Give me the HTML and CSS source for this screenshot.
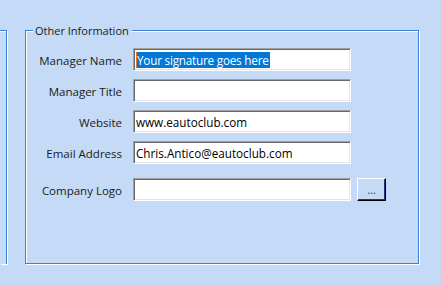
FILE: index.html
```html
<!DOCTYPE html>
<html lang="en">
<head>
    <meta charset="UTF-8">
    <title>Other Information</title>
    <link rel="stylesheet" href="styles.css">
</head>
<body>
    <div class="page">
        <div class="side-panel"></div>

        <div class="group">
            <span class="caption">Other Information</span>

            <div class="row">
                <label class="label">Manager Name</label>
                <div class="textbox"><span class="selected">Your signature goes here</span></div>
            </div>
            <div class="row">
                <label class="label">Manager Title</label>
                <div class="textbox"></div>
            </div>
            <div class="row">
                <label class="label">Website</label>
                <div class="textbox">www.eautoclub.com</div>
            </div>
            <div class="row">
                <label class="label">Email Address</label>
                <div class="textbox">Chris.Antico@eautoclub.com</div>
            </div>
            <div class="row row-logo">
                <label class="label">Company Logo</label>
                <div class="textbox"></div>
                <button type="button" class="browse">...</button>
            </div>
        </div>
    </div>
</body>
</html>
```

FILE: styles.css
```css
* {
    box-sizing: border-box;
}

body {
    margin: 0;
    background: #c4daf6;
    font-family: 'Open Sans', 'Noto Sans', sans-serif;
    font-size: 11px;
    color: #1a1a1a;
}

.page {
    display: flex;
    padding-top: 30px;
    height: 285px;
}

.side-panel {
    width: 7px;
    height: 234px;
    border-top: 1px solid #3c80da;
    border-right: 1px solid #3c80da;
    box-shadow: 1px 1px 0 #fff, inset 0 1px 0 #fff;
    margin-right: 18px;
}

.group {
    position: relative;
    width: 394px;
    height: 234px;
    border: 1px solid #3c80da;
    box-shadow: 1px 1px 0 #fff, inset 1px 1px 0 #fff;
    padding-top: 17px;
}

.caption {
    position: absolute;
    top: -8px;
    left: 7px;
    padding: 0 3px 0 2px;
    background: #c4daf6;
    line-height: 16px;
}

.row {
    display: flex;
    align-items: center;
    height: 23px;
    margin-bottom: 8px;
}

.row + .row {
    margin-top: 1px;
}

.row-logo {
    margin-top: 14px !important;
}

.label {
    width: 96px;
    text-align: right;
    margin-right: 11px;
    padding-top: 1px;
    font-size: 11.5px;
}

.textbox {
    width: 218px;
    height: 23px;
    background: #fff;
    border-top: 1px solid #a0a0a0;
    border-left: 1px solid #a0a0a0;
    border-bottom: 1px solid #fff;
    border-right: 1px solid #fff;
    box-shadow: inset 1px 1px 0 #696969, inset -1px -1px 0 #e3e3e3;
    padding: 1px 2px 0;
    font-size: 11.7px;
    line-height: 20px;
    white-space: nowrap;
    color: #000;
}

.selected {
    background: #0078d7;
    color: #fff;
    border-left: 1px solid #e8761b;
    padding-right: 1px;
    letter-spacing: -0.2px;
}

.browse {
    width: 29px;
    height: 23px;
    margin-left: 6px;
    padding: 0;
    background: #c4daf6;
    border-top: 1px solid #fff;
    border-left: 1px solid #fff;
    border-bottom: 1px solid #000;
    border-right: 1px solid #000;
    box-shadow: inset -1px -1px 0 #1c3a7a;
    font-family: inherit;
    font-size: 11px;
    color: #1c3a7a;
    line-height: 20px;
}
```
